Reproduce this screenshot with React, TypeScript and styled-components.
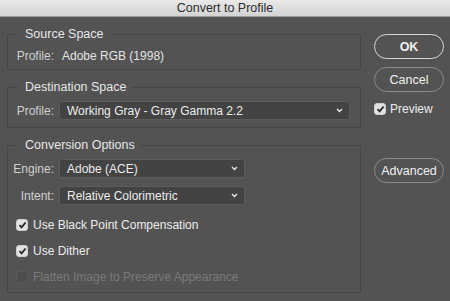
import React from "react";
import styled, { createGlobalStyle } from "styled-components";

const GlobalStyle = createGlobalStyle`
  html, body {
    margin: 0;
    padding: 0;
    background: #535353;
  }
  body {
    font-family: "Liberation Sans", Arial, sans-serif;
  }
`;

const Window = styled.div`
  width: 450px;
  height: 301px;
  background: #535353;
  overflow: hidden;
  display: flex;
  flex-direction: column;
`;

const TitleBar = styled.div`
  height: 16px;
  flex: 0 0 16px;
  background: linear-gradient(#e9e9e9, #d3d3d3);
  border-bottom: 1px solid #9c9c9c;
  display: flex;
  align-items: center;
  justify-content: center;
  font-size: 12.5px;
  color: #2b2b2b;
`;

const Body = styled.div`
  display: flex;
  padding: 10px 0 0 7px;
  gap: 13px;
`;

const LeftColumn = styled.div`
  width: 354px;
  display: flex;
  flex-direction: column;
  gap: 10px;
`;

const Group = styled.fieldset<{ $pad: string }>`
  margin: 0;
  border: 1px solid #464646;
  border-radius: 2px;
  padding: ${(p) => p.$pad};
  min-width: 0;
`;

const Legend = styled.legend`
  margin-left: 10px;
  padding: 0 6px 0 7px;
  font-size: 12.5px;
  line-height: 14px;
  color: #e6e6e6;
`;

const Row = styled.div<{ $mt?: number }>`
  display: flex;
  align-items: center;
  margin-top: ${(p) => p.$mt ?? 0}px;
`;

const Label = styled.span`
  width: 46px;
  text-align: right;
  font-size: 12px;
  line-height: 14px;
  color: #d0d0d0;
`;

const Value = styled.span`
  margin-left: 8px;
  font-size: 12px;
  line-height: 14px;
  color: #e4e4e4;
`;

const Select = styled.div<{ $w: number }>`
  margin-left: 5px;
  width: ${(p) => p.$w}px;
  height: 19px;
  box-sizing: border-box;
  background: #434343;
  border: 1px solid #5c5c5c;
  border-radius: 3px;
  display: flex;
  align-items: center;
  justify-content: space-between;
  padding: 0 6px 0 7px;
  font-size: 12px;
  color: #ececec;
`;

const Chevron = () => (
  <svg width="7" height="5" viewBox="0 0 7 5">
    <path d="M1 1 L3.5 3.5 L6 1" fill="none" stroke="#e6e6e6" strokeWidth="1.4" />
  </svg>
);

const CheckRow = styled.label<{ $mt: number; $disabled?: boolean }>`
  display: flex;
  align-items: center;
  gap: 5px;
  margin-top: ${(p) => p.$mt}px;
  margin-left: 8px;
  font-size: 12px;
  line-height: 16px;
  color: ${(p) => (p.$disabled ? "#7a7a7a" : "#ececec")};
`;

const Box = styled.span<{ $on: boolean; $disabled?: boolean }>`
  width: 12px;
  height: 12px;
  box-sizing: border-box;
  border-radius: 3px;
  display: flex;
  align-items: center;
  justify-content: center;
  background: ${(p) => (p.$disabled ? "#4d4d4d" : p.$on ? "#e2e2e2" : "#484848")};
  border: 1px solid ${(p) => (p.$disabled ? "#5a5a5a" : "#cfcfcf")};
`;

const Tick = () => (
  <svg width="9" height="8" viewBox="0 0 9 8">
    <path d="M1.5 4.2 L3.6 6.3 L7.6 1.5" fill="none" stroke="#2a2a2a" strokeWidth="1.9" />
  </svg>
);

const Check = ({ on, disabled, children, mt }: { on: boolean; disabled?: boolean; children: React.ReactNode; mt: number }) => (
  <CheckRow $mt={mt} $disabled={disabled}>
    <Box $on={on} $disabled={disabled}>{on && <Tick />}</Box>
    {children}
  </CheckRow>
);

const RightColumn = styled.div`
  width: 70px;
  padding-top: 7px;
  display: flex;
  flex-direction: column;
`;

const Button = styled.button<{ $primary?: boolean; $mt: number }>`
  margin-top: ${(p) => p.$mt}px;
  height: 25px;
  width: 70px;
  border-radius: 13px;
  background: #535353;
  border: ${(p) => (p.$primary ? "1.5px solid #d6d6d6" : "1px solid #8a8a8a")};
  color: #f0f0f0;
  font-family: inherit;
  font-size: 12.5px;
  font-weight: ${(p) => (p.$primary ? 700 : 400)};
  padding: 0;
`;

const PreviewRow = styled.label`
  margin-top: 10px;
  display: flex;
  align-items: center;
  gap: 4px;
  font-size: 12px;
  line-height: 14px;
  color: #ececec;
`;

export default function App() {
  return (
    <>
      <GlobalStyle />
      <Window>
        <TitleBar>Convert to Profile</TitleBar>
        <Body>
          <LeftColumn>
            <Group $pad="8px 0 6px 0">
              <Legend>Source Space</Legend>
              <Row>
                <Label>Profile:</Label>
                <Value>Adobe RGB (1998)</Value>
              </Row>
            </Group>
            <Group $pad="7px 0 7px 0">
              <Legend>Destination Space</Legend>
              <Row>
                <Label>Profile:</Label>
                <Select $w={291}>
                  Working Gray - Gray Gamma 2.2
                  <Chevron />
                </Select>
              </Row>
            </Group>
            <Group $pad="7px 0 7px 0">
              <Legend>Conversion Options</Legend>
              <Row>
                <Label>Engine:</Label>
                <Select $w={186}>
                  Adobe (ACE)
                  <Chevron />
                </Select>
              </Row>
              <Row $mt={8}>
                <Label>Intent:</Label>
                <Select $w={186}>
                  Relative Colorimetric
                  <Chevron />
                </Select>
              </Row>
              <Check on mt={12}>Use Black Point Compensation</Check>
              <Check on mt={10}>Use Dither</Check>
              <Check on={false} disabled mt={10}>Flatten Image to Preserve Appearance</Check>
            </Group>
          </LeftColumn>
          <RightColumn>
            <Button $primary $mt={0}>OK</Button>
            <Button $mt={8}>Cancel</Button>
            <PreviewRow>
              <Box $on>
                <Tick />
              </Box>
              Preview
            </PreviewRow>
            <Button $mt={42}>Advanced</Button>
          </RightColumn>
        </Body>
      </Window>
    </>
  );
}
